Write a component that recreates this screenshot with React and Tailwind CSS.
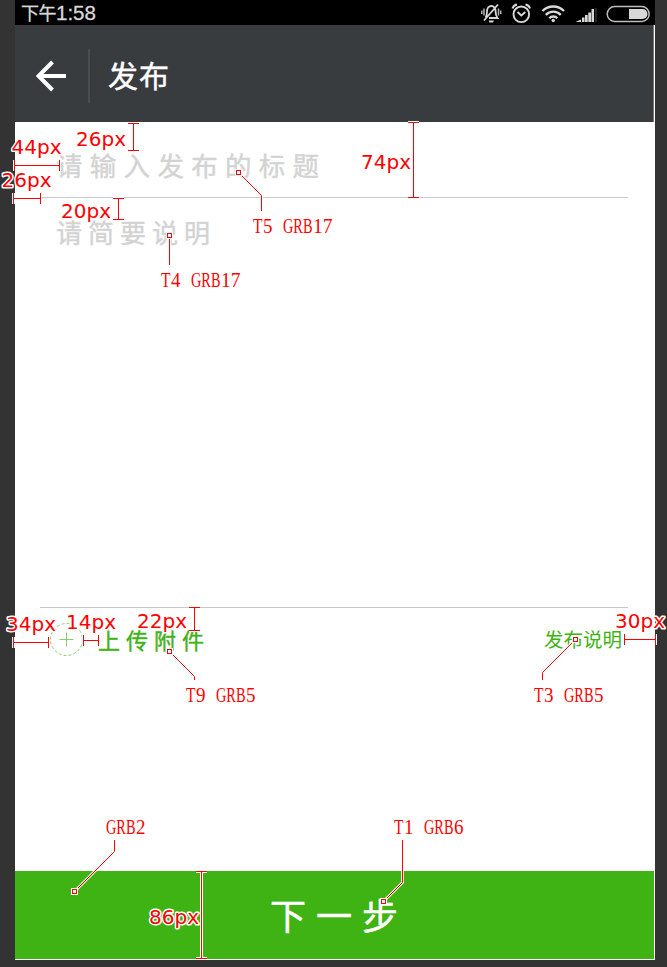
const CJK = "font-['Noto_Sans_CJK_SC',sans-serif]";

function StatusIcons() {
  return (
    <svg width="176" height="25" viewBox="479 0 176 25" fill="none" stroke="#d8d8d8" strokeWidth="1.8">
      <path d="M485.500 17.500c1.500-2 1.500-3.500 1.500-6 0-3.500 2-5.500 4.300-5.500s4.300 2 4.300 5.500c0 2.500 .3 4.500 1.900 6.500h-8.500M498 4.500 484 20.500" />
      <path d="M488.500 20.500h5.500l-1 2h-3.500z" fill="#d8d8d8" stroke="none" />
      <path d="M484 8.500v7M481.800 10.500v3.500M498.500 8.500v7M500.700 10.500v3.500" strokeWidth="1.500" stroke="#b5b5b5" />
      <circle cx="521.300" cy="14.300" r="7.800" strokeWidth="1.900" />
      <path d="M517.500 12l3.800 3.500 4-3.500M512.500 8.500c.5-2 2-3.500 4.500-4M530 8.500c-.5-2-2-3.500-4.500-4" strokeWidth="1.900" />
      <path d="M542.500 11c6-6 15.500-6 21.500 0M545.800 14.800c4-4.200 11-4.200 15 0M549.300 18.300c2-2.300 6-2.300 8 0" strokeWidth="2.400" />
      <circle cx="553.200" cy="20.500" r="1.700" fill="#d8d8d8" stroke="none" />
      <path d="M575.500 22l5.500-2.500v2.500zM582 17.500h2.500v4.500h-2.500zM585 15h2.700v7h-2.700zM588.300 12.500h2.700v9.500h-2.700zM591.500 9h2.500v13h-2.500z" fill="#d8d8d8" stroke="none" />
      <path d="M596 8v14" stroke="#252525" strokeWidth="2" />
      <rect x="607.200" y="6.500" width="42" height="15" rx="7.500" strokeWidth="1.500" stroke="#bdbdbd" />
      <path d="M629 9h13.500a5 5 0 0 1 0 10H629z" fill="#d8d8d8" stroke="none" />
    </svg>
  );
}

const measures = [
  { t: "44px", tx: 11.5, ty: 154, d: "M14 165.500H60M14.500 160V171M59.500 160V171" },
  { t: "26px", tx: 76, ty: 146, d: "M133.500 123V151M128 123.500H139M128 150.500H139" },
  { t: "26px", tx: 1.5, ty: 187, d: "M13 198.500H41M13.500 193V204M40.500 193V204" },
  { t: "20px", tx: 61, ty: 218, d: "M118.500 198V220M113 198.500H124M113 219.500H124" },
  { t: "74px", tx: 361, ty: 169, d: "M413.500 122V198M408 122.500H419M408 197.500H419" },
  { t: "34px", tx: 6, ty: 631, d: "M13 642.500H49M13.500 637V648M48.500 637V648" },
  { t: "14px", tx: 66, ty: 629, d: "M83 640.500H99M83.500 635V646M98.500 635V646" },
  { t: "22px", tx: 137, ty: 628, d: "M194.500 607V631M189 607.500H200M189 630.500H200" },
  { t: "30px", tx: 615, ty: 628, d: "M624 639.500H656M624.500 634V645M655.500 634V645" },
  { t: "86px", tx: 149, ty: 924, d: "M201.500 871V959M196 871.500H207M196 958.500H207" },
];

const callouts = [
  { t: "T5 GRB17", tx: 253, ty: 233, x: 238, y: 172, d: "M238.500 172.500 261.500 195.500V211" },
  { t: "T4 GRB17", tx: 161, ty: 287, x: 169, y: 235, d: "M169.500 235.500V265" },
  { t: "T9 GRB5", tx: 186, ty: 702, x: 169, y: 651, d: "M169.500 651.500 194.500 676.500V680" },
  { t: "T3 GRB5", tx: 534, ty: 702, x: 575, y: 639, d: "M575.500 639.500 542.500 672.500V680" },
  { t: "GRB2", tx: 106, ty: 834, x: 74, y: 891, d: "M74.500 891.500 114.500 851.500V840" },
  { t: "T1 GRB6", tx: 394, ty: 834, x: 383, y: 901, d: "M383.500 901.500 402.500 882.500V840" },
];

// Splits a code into runs so that each character fills a 10px cell.
function runs(text) {
  return [...text.matchAll(/[A-Z]+|[0-9]+/g)].map((m) => ({ s: m[0], at: m.index }));
}

function Annotations() {
  return (
    <svg className="pointer-events-none absolute inset-0" width="667" height="967" fill="none">
      {measures.map((m, i) => (
        <g key={i}>
          <path d={m.d} stroke="#fff" strokeWidth="3" />
          <path d={m.d} stroke="#f00" shapeRendering="crispEdges" />
          <text x={m.tx} y={m.ty} fontSize="20" fill="#f00" stroke="#fff" strokeWidth="3" strokeLinejoin="round" paintOrder="stroke" className="font-['DejaVu_Sans',sans-serif]">{m.t}</text>
        </g>
      ))}
      {callouts.map((c) => (
        <g key={c.t}>
          <path d={c.d} stroke="#fff" strokeOpacity=".8" strokeWidth="3" />
          <path d={c.d} stroke="#f00" />
          <rect x={c.x - 3} y={c.y - 3} width="7" height="7" fill="#fff" />
          <rect x={c.x - 1.5} y={c.y - 1.5} width="4" height="4" fill="#fff" stroke="#f00" />
          <text y={c.ty} fontSize="20" fill="#f00" className="font-['Liberation_Serif',serif]">
            {runs(c.t).map((r) => (
              <tspan key={r.at} x={c.tx + r.at * 10} textLength={r.s.length * 10 - 0.5} lengthAdjust="spacingAndGlyphs">
                {r.s}
              </tspan>
            ))}
          </text>
        </g>
      ))}
    </svg>
  );
}

export default function App() {
  return (
    <div className={`relative h-[967px] w-[667px] overflow-hidden bg-[#333] pl-[15px] ${CJK} font-['Noto_Sans_CJK_SC',sans-serif]`}>
      <div className="flex h-[960px] w-[640px] flex-col bg-white">
        <div className="flex h-[25px] shrink-0 items-center justify-between bg-black pl-[6px] text-[#d8d8d8]">
          <div className="flex items-center pt-[2px] leading-none whitespace-nowrap">
            <span className="pb-[3px] text-[18px] tracking-[-0.5px] [-webkit-text-stroke:0.3px]">下午</span>
            <span className="font-['Liberation_Sans',sans-serif] text-[20.500px] leading-none [-webkit-text-stroke:0.3px]">1:58</span>
          </div>
          <StatusIcons />
        </div>
        <header className="flex h-[97px] w-[639px] shrink-0 items-center border-r border-[#777] bg-[#393c3f] pt-[4px] pl-[21px] text-white">
          <svg width="31" height="32" viewBox="0 0 31 32" fill="none" stroke="#fff" strokeWidth="4">
            <path d="M30 16H3M16.500 2 2.500 16l14 14" />
          </svg>
          <div className="ml-[21px] h-[54px] w-[2px] bg-[#4a4d50]" />
          <h1 className="ml-[18px] pb-[4px] text-[30px] leading-none tracking-[1px] [-webkit-text-stroke:0.4px]">发布</h1>
        </header>
        <div className="ml-[25px] flex h-[76px] w-[588px] shrink-0 items-center border-b border-[#c8c8c8] pl-[16px]">
          <p className="pt-[12px] text-[26.500px] leading-none tracking-[7.300px] whitespace-nowrap text-[#d3d3d3] [-webkit-text-stroke:0.4px]">请输入发布的标题</p>
        </div>
        <div className="ml-[25px] h-[410px] w-[588px] shrink-0 border-b border-[#c8c8c8] pt-[21px] pl-[16px]">
          <p className="text-[26px] leading-none tracking-[6px] whitespace-nowrap text-[#d3d3d3] [-webkit-text-stroke:0.4px]">请简要说明</p>
        </div>
        <div className="flex h-[263px] shrink-0 items-start justify-between pt-[15px] pr-[33px] pl-[34px] text-[#3fb214]">
          <div className="flex items-center">
            <svg width="34" height="34" fill="none" stroke="#86cf6c">
              <circle cx="17.500" cy="16.500" r="16" strokeDasharray="3 2" />
              <path d="M17.500 9.500v14M10.500 16.500h14" />
            </svg>
            <span className="ml-[15px] pb-[2px] text-[22px] leading-none tracking-[6px] [-webkit-text-stroke:0.4px]">上传附件</span>
          </div>
          <span className="mt-[6px] text-[19.500px] leading-none">发布说明</span>
        </div>
        <button className="flex h-[88px] w-[639px] shrink-0 items-center justify-center bg-[#3fb214] pb-[3px] pl-[9px] text-[36px] leading-none tracking-[10px] text-white [-webkit-text-stroke:0.5px]">
          下一步
        </button>
      </div>
      <Annotations />
    </div>
  );
}
